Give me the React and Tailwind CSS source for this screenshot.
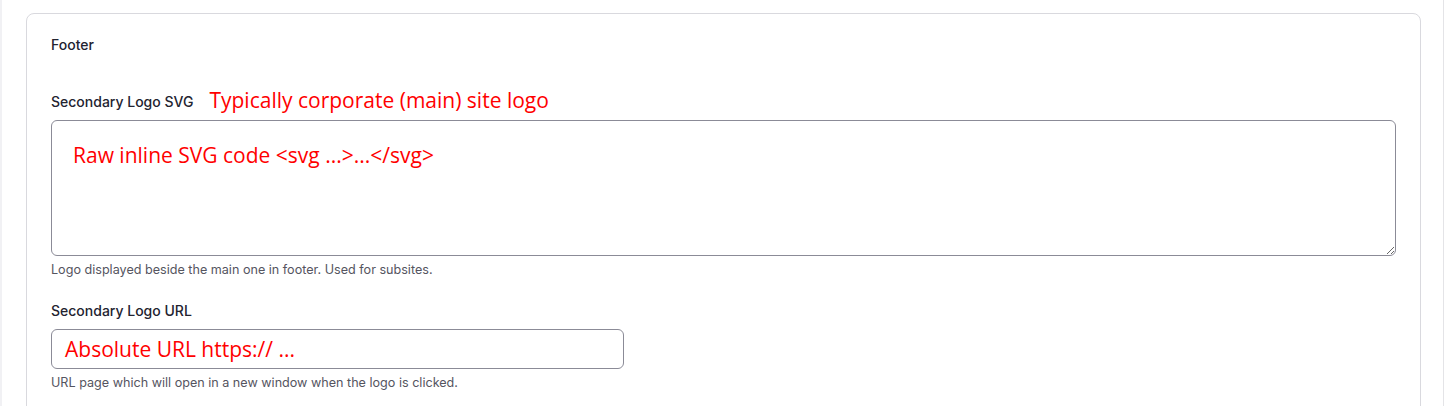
export default function App() {
  const red = { fontFamily: '"Open Sans", "Noto Sans", sans-serif' }
  return (
    <div className="min-h-[406px] bg-white border-l-2 border-[#f1f1f4] pr-[1px]" style={{ fontFamily: 'Inter, "Liberation Sans", sans-serif' }}>
      <div className="pl-[24px] pr-[22px] pt-[13px] h-[406px] border-r border-[#e4e4e7] overflow-hidden">
        <div className="h-[420px] bg-white border border-[#d9d9de] rounded-[8px] px-[24px] pt-[21px]">
          <div className="text-[14px] leading-[20px] font-medium text-[#232330]">Footer</div>

          <div className="mt-[31px] flex items-center gap-[16px] h-[28px]">
            <span className="text-[14px] leading-[20px] font-medium text-[#232330] mt-[3px]">Secondary Logo SVG</span>
            <span className="text-[21px] leading-[28px] text-[#ff0000]" style={red}>
              Typically corporate (main) site logo
            </span>
          </div>

          <textarea
            className="mt-[6px] block w-full h-[136px] border border-[#8b8b97] rounded-[6px] px-[21px] pt-[20px] text-[21px] leading-[28px] text-[#ff0000] outline-none"
            style={red}
            defaultValue="Raw inline SVG code <svg ...>...</svg>"
          />
          <div className="mt-[6px] text-[12.6px] leading-[16px] text-[#55555f]">
            Logo displayed beside the main one in footer. Used for subsites.
          </div>

          <div className="mt-[23px] text-[14px] leading-[20px] font-medium text-[#232330]">Secondary Logo URL</div>
          <div className="mt-[8px] w-[573px] h-[40px] border border-[#8b8b97] rounded-[6px] px-[13px] flex items-center">
            <span className="text-[21px] leading-[28px] text-[#ff0000]" style={red}>
              Absolute URL https:// ...
            </span>
          </div>
          <div className="mt-[6px] text-[12.6px] leading-[16px] text-[#55555f]">
            URL page which will open in a new window when the logo is clicked.
          </div>
        </div>
      </div>
    </div>
  )
}
